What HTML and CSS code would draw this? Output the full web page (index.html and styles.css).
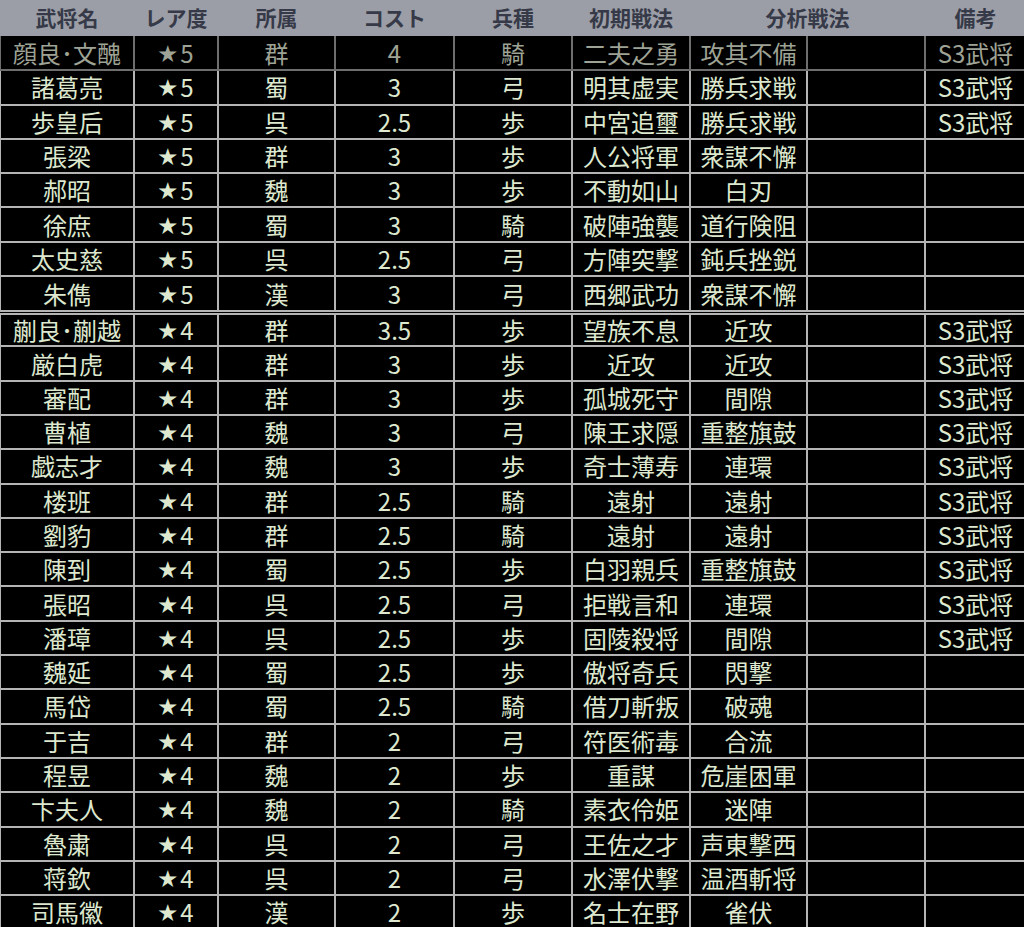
FILE: index.html
```html
<!DOCTYPE html>
<html lang="ja">
<head>
<meta charset="utf-8">
<title>武将一覧</title>
<link rel="stylesheet" href="styles.css">
</head>
<body>
<table class="roster">
  <colgroup>
    <col class="c-name"><col class="c-rare"><col class="c-fac"><col class="c-cost"><col class="c-type"><col class="c-init"><col class="c-anal"><col class="c-blank"><col class="c-note">
  </colgroup>
  <thead>
    <tr><th>武将名</th><th>レア度</th><th>所属</th><th>コスト</th><th>兵種</th><th>初期戦法</th><th colspan="2">分析戦法</th><th>備考</th></tr>
  </thead>
  <tbody>
    <tr class="dim"><td>顔良･文醜</td><td><span class="star">★</span>5</td><td>群</td><td>4</td><td>騎</td><td>二夫之勇</td><td>攻其不備</td><td></td><td>S3武将</td></tr>
    <tr><td>諸葛亮</td><td><span class="star">★</span>5</td><td>蜀</td><td>3</td><td>弓</td><td>明其虚実</td><td>勝兵求戦</td><td></td><td>S3武将</td></tr>
    <tr><td>歩皇后</td><td><span class="star">★</span>5</td><td>呉</td><td>2.5</td><td>歩</td><td>中宮追璽</td><td>勝兵求戦</td><td></td><td>S3武将</td></tr>
    <tr><td>張梁</td><td><span class="star">★</span>5</td><td>群</td><td>3</td><td>歩</td><td>人公将軍</td><td>衆謀不懈</td><td></td><td></td></tr>
    <tr><td>郝昭</td><td><span class="star">★</span>5</td><td>魏</td><td>3</td><td>歩</td><td>不動如山</td><td>白刃</td><td></td><td></td></tr>
    <tr><td>徐庶</td><td><span class="star">★</span>5</td><td>蜀</td><td>3</td><td>騎</td><td>破陣強襲</td><td>道行険阻</td><td></td><td></td></tr>
    <tr><td>太史慈</td><td><span class="star">★</span>5</td><td>呉</td><td>2.5</td><td>弓</td><td>方陣突撃</td><td>鈍兵挫鋭</td><td></td><td></td></tr>
    <tr class="sep"><td>朱儁</td><td><span class="star">★</span>5</td><td>漢</td><td>3</td><td>弓</td><td>西郷武功</td><td>衆謀不懈</td><td></td><td></td></tr>
    <tr><td>蒯良･蒯越</td><td><span class="star">★</span>4</td><td>群</td><td>3.5</td><td>歩</td><td>望族不息</td><td>近攻</td><td></td><td>S3武将</td></tr>
    <tr><td>厳白虎</td><td><span class="star">★</span>4</td><td>群</td><td>3</td><td>歩</td><td>近攻</td><td>近攻</td><td></td><td>S3武将</td></tr>
    <tr><td>審配</td><td><span class="star">★</span>4</td><td>群</td><td>3</td><td>歩</td><td>孤城死守</td><td>間隙</td><td></td><td>S3武将</td></tr>
    <tr><td>曹植</td><td><span class="star">★</span>4</td><td>魏</td><td>3</td><td>弓</td><td>陳王求隠</td><td>重整旗鼓</td><td></td><td>S3武将</td></tr>
    <tr><td>戯志才</td><td><span class="star">★</span>4</td><td>魏</td><td>3</td><td>歩</td><td>奇士薄寿</td><td>連環</td><td></td><td>S3武将</td></tr>
    <tr><td>楼班</td><td><span class="star">★</span>4</td><td>群</td><td>2.5</td><td>騎</td><td>遠射</td><td>遠射</td><td></td><td>S3武将</td></tr>
    <tr><td>劉豹</td><td><span class="star">★</span>4</td><td>群</td><td>2.5</td><td>騎</td><td>遠射</td><td>遠射</td><td></td><td>S3武将</td></tr>
    <tr><td>陳到</td><td><span class="star">★</span>4</td><td>蜀</td><td>2.5</td><td>歩</td><td>白羽親兵</td><td>重整旗鼓</td><td></td><td>S3武将</td></tr>
    <tr><td>張昭</td><td><span class="star">★</span>4</td><td>呉</td><td>2.5</td><td>弓</td><td>拒戦言和</td><td>連環</td><td></td><td>S3武将</td></tr>
    <tr><td>潘璋</td><td><span class="star">★</span>4</td><td>呉</td><td>2.5</td><td>歩</td><td>固陵殺将</td><td>間隙</td><td></td><td>S3武将</td></tr>
    <tr><td>魏延</td><td><span class="star">★</span>4</td><td>蜀</td><td>2.5</td><td>歩</td><td>傲将奇兵</td><td>閃撃</td><td></td><td></td></tr>
    <tr><td>馬岱</td><td><span class="star">★</span>4</td><td>蜀</td><td>2.5</td><td>騎</td><td>借刀斬叛</td><td>破魂</td><td></td><td></td></tr>
    <tr><td>于吉</td><td><span class="star">★</span>4</td><td>群</td><td>2</td><td>弓</td><td>符医術毒</td><td>合流</td><td></td><td></td></tr>
    <tr><td>程昱</td><td><span class="star">★</span>4</td><td>魏</td><td>2</td><td>歩</td><td>重謀</td><td>危崖困軍</td><td></td><td></td></tr>
    <tr><td>卞夫人</td><td><span class="star">★</span>4</td><td>魏</td><td>2</td><td>騎</td><td>素衣伶姫</td><td>迷陣</td><td></td><td></td></tr>
    <tr><td>魯粛</td><td><span class="star">★</span>4</td><td>呉</td><td>2</td><td>弓</td><td>王佐之才</td><td>声東撃西</td><td></td><td></td></tr>
    <tr><td>蒋欽</td><td><span class="star">★</span>4</td><td>呉</td><td>2</td><td>弓</td><td>水澤伏撃</td><td>温酒斬将</td><td></td><td></td></tr>
    <tr><td>司馬徽</td><td><span class="star">★</span>4</td><td>漢</td><td>2</td><td>歩</td><td>名士在野</td><td>雀伏</td><td></td><td></td></tr>
  </tbody>
</table>
</body>
</html>
```

FILE: styles.css
```css
html, body {
  margin: 0;
  padding: 0;
  background: #000;
  overflow: hidden;
}

.roster {
  width: 1026px;
  margin-left: -1px;
  table-layout: fixed;
  border-collapse: collapse;
  font-family: "Noto Sans CJK JP", "Noto Sans", sans-serif;
  font-size: 24px;
  color: #dde8cf;
}

.c-name { width: 134px; }
.c-rare { width: 84px; }
.c-fac { width: 117px; }
.c-cost { width: 119px; }
.c-type { width: 118px; }
.c-init { width: 118px; }
.c-anal { width: 117px; }
.c-blank { width: 118px; }
.c-note { width: 101px; }

.roster thead tr {
  height: 36px;
  background: #9c9ea7;
}

.roster th {
  font-size: 21px;
  font-weight: 700;
  color: #363a48;
  padding: 0 0 2px;
  line-height: 1;
  text-align: center;
  border: none;
}

.roster tbody tr {
  height: 34.3px;
}

.roster tbody tr.sep {
  height: 36px;
}

.roster td {
  padding: 0;
  line-height: 1;
  text-align: center;
  white-space: nowrap;
  overflow: hidden;
  border: 2px solid #b4b4b4;
  background: #000;
}

.star {
  font-size: 19px;
  margin-right: 3px;
  vertical-align: 2px;
}

.roster tr.dim td {
  color: #9ea395;
  border-color: #6e6e6e;
  border-top: none;
}

.roster tr.sep td {
  border-bottom: 5px double #b4b4b4;
  padding-top: 1px;
}
```
